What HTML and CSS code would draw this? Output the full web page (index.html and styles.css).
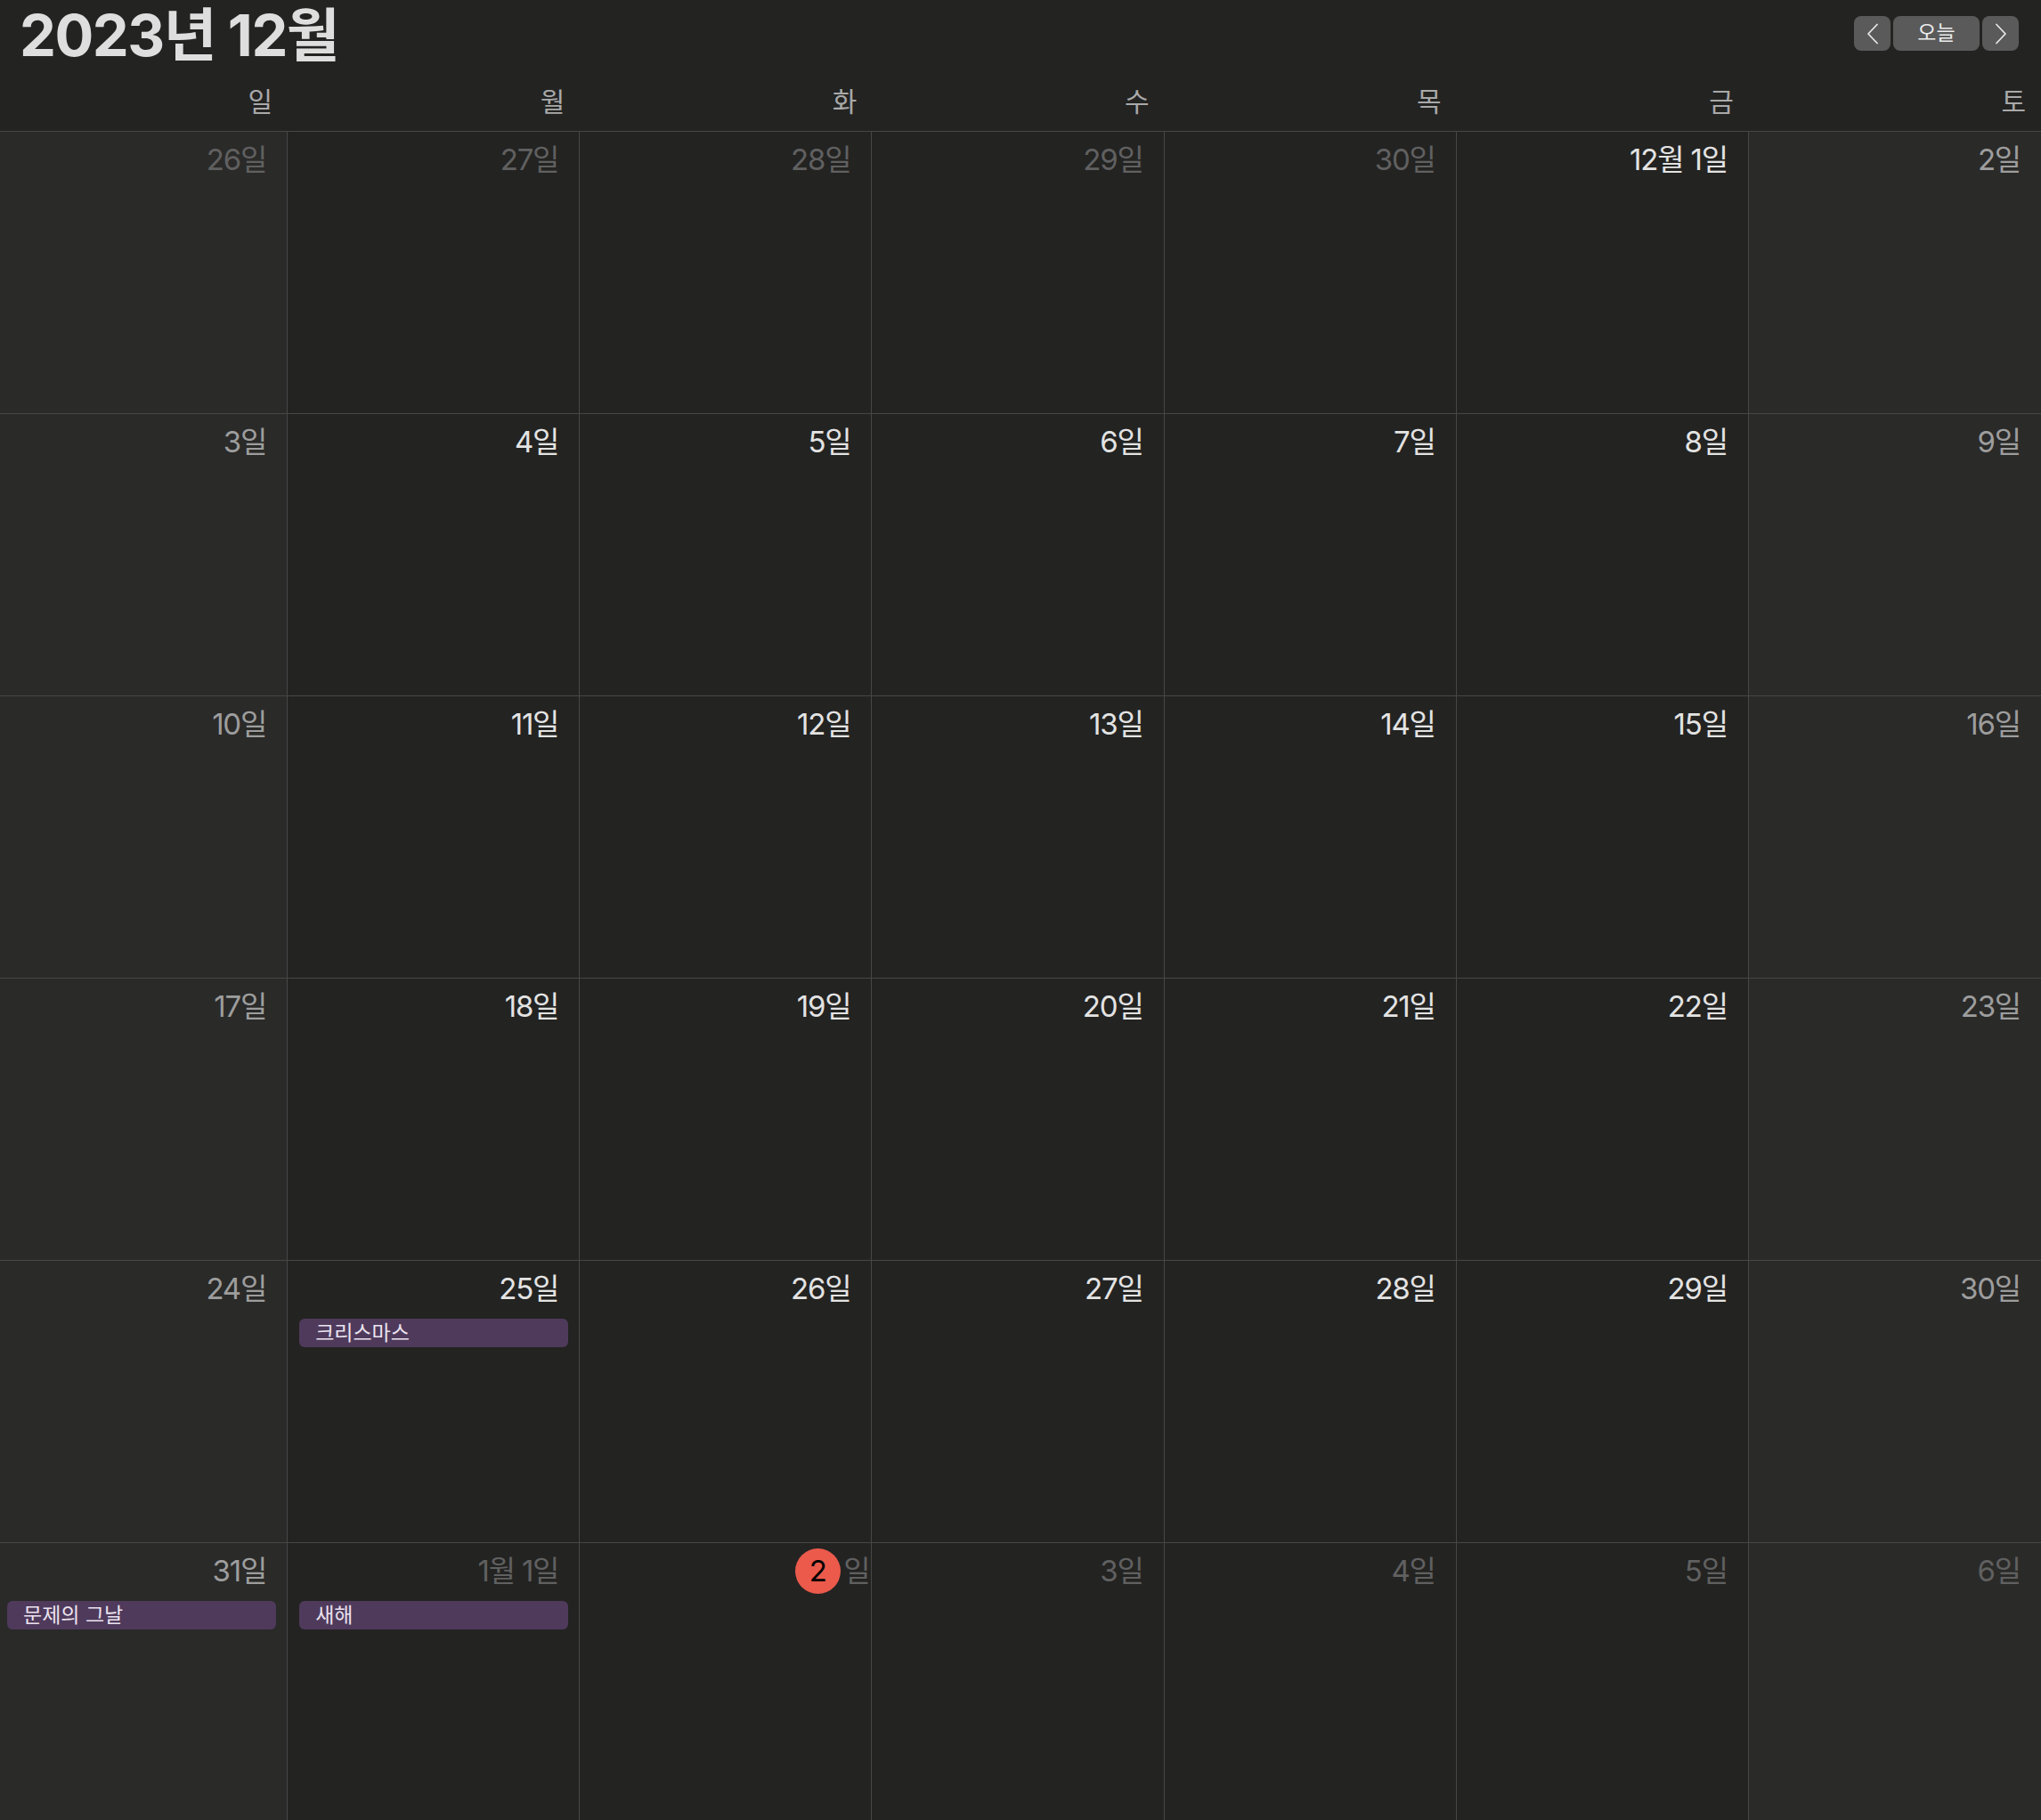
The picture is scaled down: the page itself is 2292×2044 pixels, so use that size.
FILE: index.html
```html
<!DOCTYPE html>
<html lang="ko">
<head>
<meta charset="utf-8">
<title>2023년 12월</title>
<link rel="stylesheet" href="styles.css">
</head>
<body>
<header class="topbar">
  <h1 class="title">2023년 12월</h1>
  <div class="nav">
    <div class="nav-btn nav-btn--icon"><svg width="14" height="24" viewBox="0 0 14 24"><polyline points="12,1.5 2,12 12,22.5" fill="none" stroke="#e6e6e6" stroke-width="1.8" stroke-linecap="round" stroke-linejoin="round"/></svg></div>
    <div class="nav-btn nav-btn--today">오늘</div>
    <div class="nav-btn nav-btn--icon"><svg width="14" height="24" viewBox="0 0 14 24"><polyline points="2,1.5 12,12 2,22.5" fill="none" stroke="#e6e6e6" stroke-width="1.8" stroke-linecap="round" stroke-linejoin="round"/></svg></div>
  </div>
</header>
<div class="weekdays">
  <div class="wd">일</div><div class="wd">월</div><div class="wd">화</div><div class="wd">수</div><div class="wd">목</div><div class="wd">금</div><div class="wd">토</div>
</div>
<main class="grid">
  <div class="cell weekend"><div class="date other">26일</div></div>
  <div class="cell"><div class="date other">27일</div></div>
  <div class="cell"><div class="date other">28일</div></div>
  <div class="cell"><div class="date other">29일</div></div>
  <div class="cell"><div class="date other">30일</div></div>
  <div class="cell"><div class="date">12월 1일</div></div>
  <div class="cell weekend"><div class="date muted">2일</div></div>

  <div class="cell weekend"><div class="date muted">3일</div></div>
  <div class="cell"><div class="date">4일</div></div>
  <div class="cell"><div class="date">5일</div></div>
  <div class="cell"><div class="date">6일</div></div>
  <div class="cell"><div class="date">7일</div></div>
  <div class="cell"><div class="date">8일</div></div>
  <div class="cell weekend"><div class="date muted">9일</div></div>

  <div class="cell weekend"><div class="date muted">10일</div></div>
  <div class="cell"><div class="date">11일</div></div>
  <div class="cell"><div class="date">12일</div></div>
  <div class="cell"><div class="date">13일</div></div>
  <div class="cell"><div class="date">14일</div></div>
  <div class="cell"><div class="date">15일</div></div>
  <div class="cell weekend"><div class="date muted">16일</div></div>

  <div class="cell weekend"><div class="date muted">17일</div></div>
  <div class="cell"><div class="date">18일</div></div>
  <div class="cell"><div class="date">19일</div></div>
  <div class="cell"><div class="date">20일</div></div>
  <div class="cell"><div class="date">21일</div></div>
  <div class="cell"><div class="date">22일</div></div>
  <div class="cell weekend"><div class="date muted">23일</div></div>

  <div class="cell weekend"><div class="date muted">24일</div></div>
  <div class="cell"><div class="date">25일</div><div class="event">크리스마스</div></div>
  <div class="cell"><div class="date">26일</div></div>
  <div class="cell"><div class="date">27일</div></div>
  <div class="cell"><div class="date">28일</div></div>
  <div class="cell"><div class="date">29일</div></div>
  <div class="cell weekend"><div class="date muted">30일</div></div>

  <div class="cell weekend"><div class="date muted">31일</div><div class="event">문제의 그날</div></div>
  <div class="cell"><div class="date other">1월 1일</div><div class="event">새해</div></div>
  <div class="cell"><div class="date other date--today"><span class="today-badge">2</span>일</div></div>
  <div class="cell"><div class="date other">3일</div></div>
  <div class="cell"><div class="date other">4일</div></div>
  <div class="cell"><div class="date other">5일</div></div>
  <div class="cell weekend"><div class="date other">6일</div></div>
</main>
</body>
</html>
```

FILE: styles.css
```css
* { box-sizing: border-box; }

html, body {
  margin: 0;
  padding: 0;
}

body {
  width: 2292px;
  height: 2044px;
  overflow: hidden;
  background: #232322;
  color: #e3e3e3;
  font-family: Inter, "Noto Sans CJK KR", sans-serif;
}

.topbar {
  display: flex;
  justify-content: space-between;
  align-items: flex-start;
  height: 80px;
  padding: 0 25px 0 22px;
}

.title {
  margin: 0;
  font-size: 65px;
  font-weight: 700;
  line-height: 80px;
  color: #dedede;
  letter-spacing: -1.5px;
}

.nav {
  display: flex;
  gap: 3px;
  margin-top: 18px;
}

.nav-btn {
  height: 39px;
  background: #5a5a5a;
  border-radius: 8px;
  display: flex;
  align-items: center;
  justify-content: center;
  color: #ececec;
  font-size: 23px;
  line-height: 1;
}

.nav-btn--icon { width: 41px; }
.nav-btn--today { width: 97px; }

.weekdays {
  display: grid;
  grid-template-columns: repeat(7, 1fr);
  align-items: center;
  margin-left: -5px;
  width: calc(100% + 5px);
  height: 68px;
  border-bottom: 1px solid #474747;
}

.wd {
  text-align: right;
  padding-right: 17px;
  font-size: 30px;
  line-height: 36px;
  color: #a9a9a9;
}

.grid {
  display: grid;
  grid-template-columns: repeat(7, 1fr);
  grid-auto-rows: 317px;
  margin-left: -5px;
  width: calc(100% + 5px);
}

.cell {
  display: flex;
  flex-direction: column;
  padding-top: 11px;
  border-right: 1px solid #474747;
  border-bottom: 1px solid #474747;
  background: #232322;
}

.cell:nth-child(7n) { border-right: none; }

.cell.weekend { background: #2a2a29; }

.date {
  display: flex;
  justify-content: flex-end;
  align-items: center;
  height: 40px;
  padding-right: 23px;
  font-size: 33px;
  line-height: 40px;
  letter-spacing: -1.2px;
  color: #e3e3e3;
  white-space: pre;
}

.date.muted { color: #9d9d9d; }
.date.other { color: #606060; }

.date--today { padding-right: 2px; }

.today-badge {
  display: inline-flex;
  align-items: center;
  justify-content: center;
  width: 51px;
  height: 51px;
  flex: none;
  margin-right: 3px;
  border-radius: 50%;
  background: #eb5a4b;
  color: #000;
  font-size: 33px;
  line-height: 1;
  letter-spacing: 0;
}

.event {
  margin: 14px 12px 0 13px;
  height: 32px;
  padding-left: 18px;
  border-radius: 6px;
  background: #4f3a5c;
  color: #ebe3ef;
  font-size: 23px;
  line-height: 32px;
  white-space: nowrap;
  overflow: hidden;
}
```
